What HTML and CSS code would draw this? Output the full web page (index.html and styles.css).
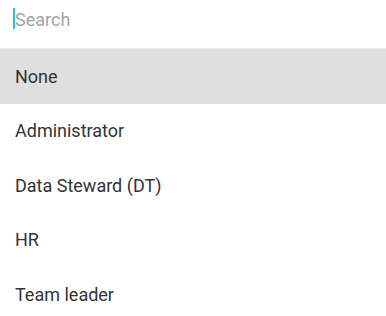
FILE: index.html
```html
<!DOCTYPE html>
<html>
<head>
<meta charset="utf-8">
<link rel="stylesheet" href="styles.css">
</head>
<body>
<div class="menu">
  <div class="search">
    <span class="caret"></span>
    <input class="search-input" type="text" placeholder="Search">
  </div>
  <ul class="options">
    <li class="option active">None</li>
    <li class="option">Administrator</li>
    <li class="option">Data Steward (DT)</li>
    <li class="option">HR</li>
    <li class="option">Team leader</li>
  </ul>
</div>
</body>
</html>
```
FILE: styles.css
```css
html, body {
  margin: 0;
  padding: 0;
  background: #ffffff;
}
body {
  font-family: Roboto, "Liberation Sans", Arial, sans-serif;
  width: 386px;
  height: 316px;
  overflow: hidden;
}
.menu {
  display: flex;
  flex-direction: column;
}
.search {
  height: 40px;
  display: flex;
  align-items: flex-start;
  padding: 8px 0 0 13px;
  border-bottom: 1px solid #ebebeb;
  box-sizing: content-box;
}
.caret {
  width: 1.5px;
  height: 21px;
  background: #29c5d6;
  flex: none;
}
.search-input {
  border: none;
  outline: none;
  padding: 0;
  margin: 0 0 0 0.5px;
  font-family: inherit;
  font-size: 18px;
  line-height: 24px;
  color: #333333;
  background: transparent;
  flex: 1;
  height: 24px;
}
.search-input::placeholder {
  color: #a3a3a3;
}
.options {
  list-style: none;
  margin: 0;
  padding: 0;
}
.option {
  height: 54.5px;
  display: flex;
  align-items: center;
  padding-left: 15px;
  font-size: 18px;
  color: #333333;
}
.option.active {
  background: #dfdfdf;
}
```
